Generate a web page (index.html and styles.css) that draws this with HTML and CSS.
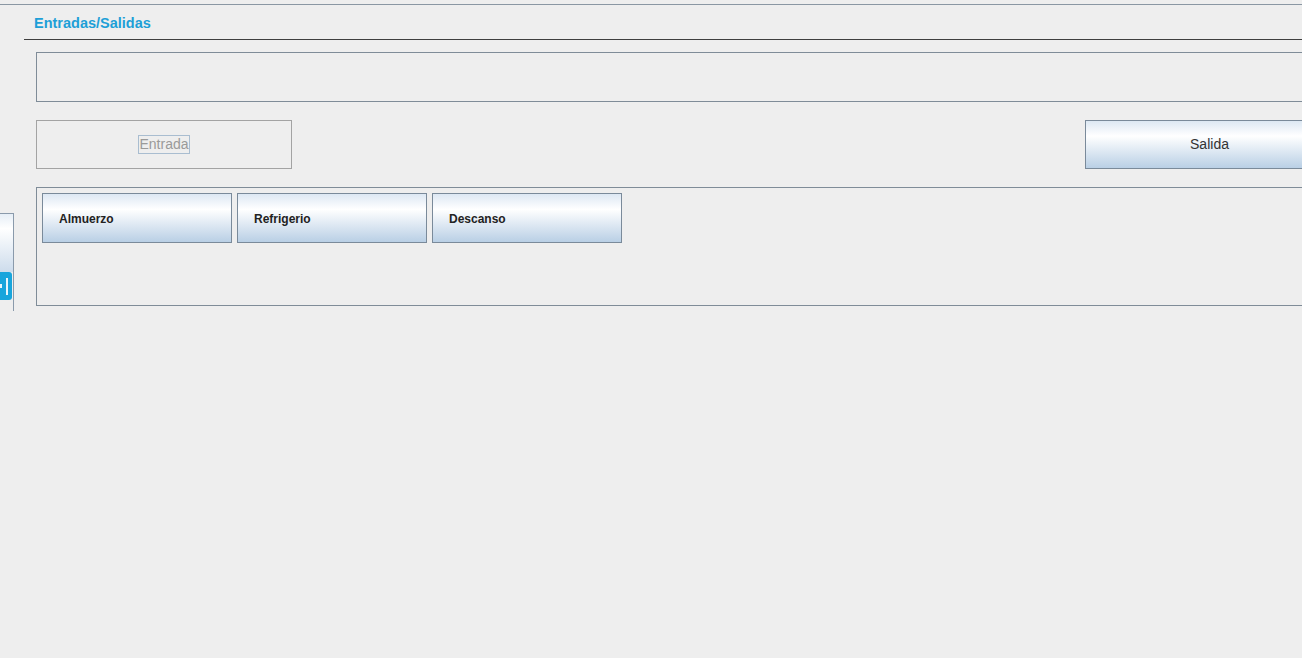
FILE: index.html
```html
<!DOCTYPE html>
<html lang="es">
<head>
<meta charset="utf-8">
<title>Entradas/Salidas</title>
<link rel="stylesheet" href="styles.css">
</head>
<body>
<div class="topline"></div>
<div class="layout">
  <div class="side">
    <div class="stub">
      <div class="stub-grad"></div>
      <div class="stub-icon"><span></span><span></span></div>
      <div class="stub-rest"></div>
    </div>
  </div>
  <div class="main">
    <div class="titlebar"><span class="title">Entradas/Salidas</span></div>
    <div class="content">
      <div class="field"></div>
      <div class="actions">
        <button class="btn btn-disabled" disabled><span class="focus">Entrada</span></button>
        <button class="btn btn-grad">Salida</button>
      </div>
      <div class="panel">
        <button class="pbtn">Almuerzo</button>
        <button class="pbtn">Refrigerio</button>
        <button class="pbtn">Descanso</button>
      </div>
    </div>
  </div>
</div>
</body>
</html>
```
FILE: styles.css
```css
html, body {
  margin: 0;
  padding: 0;
  background: #eeeeee;
  overflow: hidden;
  width: 1302px;
  height: 658px;
  font-family: "Liberation Sans", Arial, sans-serif;
}
.topline {
  height: 0;
  margin-top: 4px;
  border-top: 1px solid #8a97a3;
  width: 1302px;
}
.layout {
  display: flex;
}
.side {
  width: 24px;
  flex: none;
}
.stub {
  margin-top: 208px;
  margin-left: -40px;
  width: 53px;
  border-top: 1px solid #8a9aab;
  border-right: 1px solid #8a9aab;
  display: flex;
  flex-direction: column;
}
.stub-grad {
  height: 58px;
  background: linear-gradient(#e6eef6, #ffffff 25%, #cddcec);
}
.stub-icon {
  height: 28px;
  margin-right: 1px;
  background: #18a5dc;
  border-radius: 0 3px 3px 0;
  display: flex;
  justify-content: flex-end;
  align-items: center;
  gap: 4px;
  padding-right: 4px;
}
.stub-icon span {
  width: 2px;
  height: 17px;
  background: #e9f6fc;
}
.stub-icon span:first-child {
  height: 4px;
  width: 2px;
}
.stub-rest {
  height: 11px;
  background: #eeeeee;
}
.main {
  flex: none;
  width: 1330px;
}
.titlebar {
  height: 34px;
  border-bottom: 1px solid #3e3e3e;
  display: flex;
  align-items: center;
  padding-left: 10px;
}
.title {
  font-weight: bold;
  font-size: 14.5px;
  color: #1d9fd7;
  margin-top: 2px;
}
.content {
  padding: 12px 0 0 12px;
  width: 1298px;
}
.field {
  height: 48px;
  border: 1px solid #7f8c98;
  background: #eeeeee;
}
.actions {
  margin-top: 18px;
  display: flex;
  justify-content: space-between;
}
.btn {
  height: 49px;
  box-sizing: border-box;
  font-family: "Liberation Sans", Arial, sans-serif;
  font-size: 14px;
  padding: 0 0 2px 0;
  margin: 0;
}
.btn-disabled {
  width: 256px;
  background: #eeeeee;
  border: 1px solid #a3a3a3;
  color: #9a9a9a;
}
.focus {
  border: 1px solid #a9bdd0;
  padding: 0 0 1px 0;
}
.btn-grad {
  width: 249px;
  border: 1px solid #7a8a9a;
  color: #333333;
  background: linear-gradient(#dde8f3, #fbfcfe 28%, #ffffff 32%, #b9cfe5);
}
.panel {
  margin-top: 18px;
  height: 107px;
  border: 1px solid #7f8c98;
  padding: 5px;
  display: flex;
  align-items: flex-start;
  gap: 5px;
}
.pbtn {
  width: 190px;
  height: 50px;
  box-sizing: border-box;
  border: 1px solid #7a8a9a;
  background: linear-gradient(#dde8f3, #fbfcfe 28%, #ffffff 32%, #b9cfe5);
  font-family: "Liberation Sans", Arial, sans-serif;
  font-weight: bold;
  font-size: 12px;
  color: #222222;
  text-align: left;
  padding: 2px 0 0 16px;
  margin: 0;
}
```
